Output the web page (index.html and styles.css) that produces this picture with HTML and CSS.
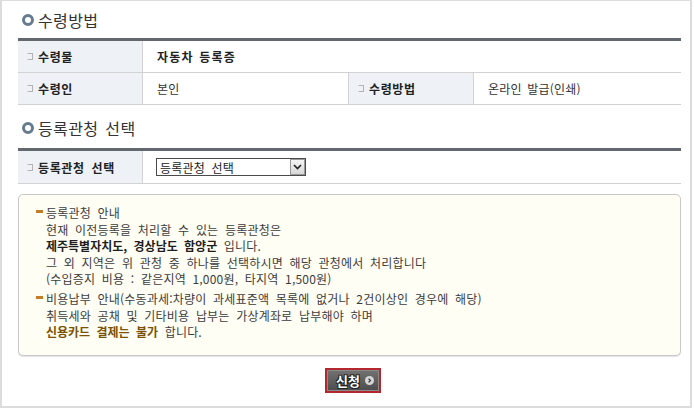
FILE: index.html
```html
<!DOCTYPE html>
<html lang="ko">
<head>
    <meta charset="UTF-8">
    <meta name="viewport" content="width=device-width, initial-scale=1.0">
    <title>수령방법 / 등록관청 선택</title>
    <link rel="stylesheet" href="styles.css">
</head>
<body>

    <div class="frame">

        <h2 class="sec-title"><span class="ring"></span>수령방법</h2>

        <div class="info-table">
            <div class="row row-2col">
                <div class="th">수령물</div>
                <div class="td strong">자동차 등록증</div>
            </div>
            <div class="row row-4col">
                <div class="th">수령인</div>
                <div class="td">본인</div>
                <div class="th">수령방법</div>
                <div class="td">온라인 발급(인쇄)</div>
            </div>
        </div>

        <h2 class="sec-title sec-second"><span class="ring"></span>등록관청 선택</h2>

        <div class="info-table">
            <div class="row row-2col tall">
                <div class="th">등록관청 선택</div>
                <div class="td">
                    <div class="fake-select">
                        <span class="sel-text">등록관청 선택</span>
                        <span class="sel-arrow">
                            <svg width="9" height="6" viewBox="0 0 9 6">
                                <path d="M1 1 L4.5 4.5 L8 1" fill="none" stroke="#222" stroke-width="1.6"/>
                            </svg>
                        </span>
                    </div>
                </div>
            </div>
        </div>

        <div class="notice">
            <div class="note-item">
                <p class="note-head">등록관청 안내</p>
                <p>현재 이전등록을 처리할 수 있는 등록관청은</p>
                <p><b>제주특별자치도, 경상남도 함양군</b> 입니다.</p>
                <p>그 외 지역은 위 관청 중 하나를 선택하시면 해당 관청에서 처리합니다</p>
                <p>(수입증지 비용 : 같은지역 1,000원, 타지역 1,500원)</p>
            </div>
            <div class="note-item">
                <p class="note-head">비용납부 안내(수동과세:차량이 과세표준액 목록에 없거나 2건이상인 경우에 해당)</p>
                <p>취득세와 공채 및 기타비용 납부는 가상계좌로 납부해야 하며</p>
                <p><b class="warn">신용카드 결제는 불가</b> 합니다.</p>
            </div>
        </div>

        <div class="btn-area">
            <a class="btn-apply" href="#">신청
                <span class="btn-ico">
                    <svg width="9" height="9" viewBox="0 0 9 9">
                        <circle cx="4.5" cy="4.5" r="4.5" fill="#d6d6d6"/>
                        <path d="M3.6 2.6 L5.4 4.5 L3.6 6.4" fill="none" stroke="#333" stroke-width="1.3"/>
                    </svg>
                </span>
            </a>
        </div>

    </div>

</body>
</html>
```

FILE: styles.css
```css
:root
{
    --line-dark: #62686e;
    --line: #d2d2d2;
    --th-bg: #eef2f7;
    --text: #3c3c3c;
}

*
{
    margin: 0px;
    padding: 0px;
    box-sizing: border-box;
    font-family: "Noto Sans CJK KR", "Noto Sans", sans-serif;
}

body
{
    background-color: #fff;
}

.frame
{
    width: 692px;
    height: 408px;
    border: 2px solid #dcdcdc;
    border-top-width: 1px;
    padding: 7px 9px 0px 16px;
}

/* section titles */
.sec-title
{
    display: flex;
    align-items: center;
    height: 24px;
    margin-bottom: 6px;
    font-size: 16px;
    font-weight: normal;
    color: #333;
    letter-spacing: 0.4px;
    word-spacing: 2px;
}

.sec-second
{
    margin-top: 11px;
    margin-bottom: 8px;
}

.ring
{
    width: 12px;
    height: 12px;
    margin: 0px 4px 0px 4px;
    border: 3px solid #667b90;
    border-radius: 50%;
}

/* tables */
.info-table
{
    border-top: 3px solid var(--line-dark);
}

.row
{
    display: grid;
    height: 32px;
    border-bottom: 1px solid var(--line);
}

.row.tall
{
    height: 33px;
}

.row-2col
{
    grid-template-columns: 125px 1fr;
}

.row-4col
{
    grid-template-columns: 125px 206px 125px 1fr;
}

.th, .td
{
    display: flex;
    align-items: center;
    font-size: 12px;
}

.th
{
    padding-left: 9px;
    background-color: var(--th-bg);
    border-right: 1px solid var(--line);
    font-weight: bold;
    color: #222;
    letter-spacing: 0.6px;
    word-spacing: 3px;
}

.th::before
{
    content: "";
    width: 4px;
    height: 5px;
    margin-right: 5px;
    border: 1px solid #b4b4b4;
    border-left-color: transparent;
}

.td
{
    padding-left: 14px;
    color: #333;
    letter-spacing: 0.2px;
    word-spacing: 2px;
}

.row-4col .td:nth-child(2)
{
    border-right: 1px solid var(--line);
}

.td.strong
{
    font-weight: bold;
    color: #222;
    letter-spacing: 1.2px;
    word-spacing: 1px;
}

/* fake select */
.fake-select
{
    display: flex;
    align-items: center;
    justify-content: space-between;
    width: 150px;
    height: 18px;
    margin-left: -1px;
    padding-left: 3px;
    border: 1px solid #4a4a4a;
    background-color: #fff;
    font-size: 12px;
    color: #222;
    letter-spacing: 0.2px;
    word-spacing: 3px;
}

.sel-arrow
{
    display: flex;
    justify-content: center;
    align-items: center;
    width: 15px;
    height: 16px;
    border: 1px solid #9a9a9a;
    background: linear-gradient(#f4f4f4, #d8d8d8);
}

/* notice box */
.notice
{
    margin-top: 10px;
    height: 162px;
    padding: 10px 0px 0px 27px;
    border: 1px solid #c9c9c9;
    border-radius: 5px;
    background-color: #fffef4;
    box-shadow: 0px 1px 1px rgba(0, 0, 0, 0.12);
    font-size: 12px;
    line-height: 16.5px;
    color: var(--text);
    letter-spacing: 0.2px;
    word-spacing: 3px;
}

.note-item + .note-item
{
    margin-top: 3.5px;
}

.note-head::before
{
    content: "";
    display: inline-block;
    width: 7px;
    height: 3px;
    margin-left: -10px;
    margin-right: 3px;
    vertical-align: 5px;
    background-color: #c47d25;
}

.notice b
{
    color: #1e1e1e;
    letter-spacing: 0px;
    word-spacing: 3px;
}

.notice b.warn
{
    color: #7a5204;
}

/* button */
.btn-area
{
    display: flex;
    justify-content: center;
    margin-top: 12px;
    padding-left: 7px;
}

.btn-apply
{
    display: flex;
    align-items: center;
    gap: 5px;
    width: 56px;
    height: 25px;
    padding-left: 9px;
    border: 2px solid #b3272f;
    background: linear-gradient(#727272, #4c4c4c);
    box-shadow: inset 0px 0px 0px 1px #8a8a8a;
    color: #fff;
    font-size: 13px;
    font-weight: bold;
    text-decoration: none;
    text-shadow: 1px 1px 0px #222, -1px -1px 0px #222, 1px -1px 0px #222, -1px 1px 0px #222;
}

.btn-ico
{
    display: flex;
}
```
